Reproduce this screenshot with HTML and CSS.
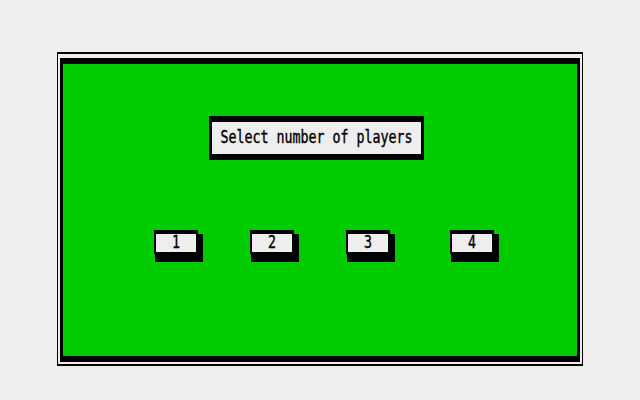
FILE: index.html
```html
<!DOCTYPE html>
<html>
<head>
<meta charset="utf-8">
<link rel="stylesheet" href="styles.css">
</head>
<body>
<div class="frame">
  <div class="board">
    <div class="title"><span class="txt">Select number of players</span></div>
    <div class="choices">
      <div class="btn"><span class="txt">1</span></div>
      <div class="btn"><span class="txt">2</span></div>
      <div class="btn"><span class="txt">3</span></div>
      <div class="btn btn-last"><span class="txt">4</span></div>
    </div>
  </div>
</div>
</body>
</html>
```
FILE: styles.css
```css
html, body {
  margin: 0;
  padding: 0;
  background: #eeeeee;
}
body {
  width: 640px;
  height: 400px;
  overflow: hidden;
  padding-top: 52px;
  box-sizing: border-box;
}
.frame {
  margin-left: 57px;
  width: 526px;
  height: 314px;
  box-sizing: border-box;
  border-style: solid;
  border-color: #000;
  border-width: 2px 1px;
  padding: 4px 2px 2px 2px;
  background: #eeeeee;
}
.board {
  box-sizing: border-box;
  height: 304px;
  border-style: solid;
  border-color: #000;
  border-width: 6px 3px;
  background: #00cc00;
  padding-top: 52px;
}
.title {
  box-sizing: border-box;
  margin-left: 146px;
  width: 215px;
  height: 44px;
  border-style: solid;
  border-color: #000;
  border-width: 6px 3px;
  background: #eeeeee;
  display: flex;
  align-items: center;
  justify-content: center;
}
.txt {
  font-family: "DejaVu Sans Mono", "Liberation Mono", monospace;
  font-weight: normal;
  font-size: 13.3px;
  line-height: 16px;
  color: #000;
  display: inline-block;
  transform: scaleY(1.3);
  -webkit-text-stroke: 0.3px #000;
}
.choices {
  display: flex;
  margin-top: 70px;
  padding-left: 91px;
  gap: 52px;
}
.btn {
  box-sizing: border-box;
  width: 44px;
  height: 24px;
  border-style: solid;
  border-color: #000;
  border-width: 4px 2px 2px 2px;
  background: #eeeeee;
  box-shadow: 3px 6px 0 2px #000;
  display: flex;
  align-items: center;
  justify-content: center;
}
.btn-last {
  margin-left: 8px;
}
```
